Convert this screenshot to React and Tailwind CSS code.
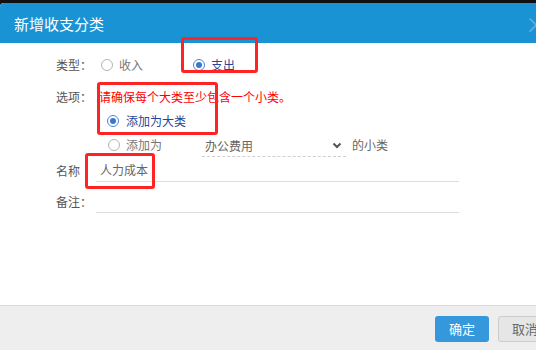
import React from "react";

const font = { fontFamily: '"Noto Sans CJK SC", "Noto Sans", sans-serif' };

const Radio = ({ checked }) =>
  checked ? (
    <span className="w-[12px] h-[12px] rounded-full border-[1.5px] border-[#4a86d4] flex items-center justify-center shrink-0">
      <span className="w-[6px] h-[6px] rounded-full bg-[#3a78cf]"></span>
    </span>
  ) : (
    <span className="w-[12px] h-[12px] rounded-full border border-[#b4b4b4] shrink-0"></span>
  );

const Mark = ({ className }) => (
  <div
    className={
      "absolute border-[3px] border-[#ff2424] rounded-[3px] pointer-events-none " +
      className
    }
  ></div>
);

const App = () => {
  return (
    <div
      className="relative w-[536px] h-[350px] overflow-hidden bg-[#111] pt-[3px] text-[12px]"
      style={font}
    >
      <div className="w-[560px] h-[347px] flex flex-col rounded-tl-[4px] overflow-hidden bg-white">
        {/* header */}
        <div className="h-[40px] bg-[#1a93d4] flex items-center justify-between pl-[14px] pr-[13px] shrink-0">
          <span className="text-white text-[15px] leading-none">新增收支分类</span>
          <span className="text-[#5fb0de] text-[22px] leading-none">×</span>
        </div>

        {/* body */}
        <div className="flex-1 pl-[56px] pt-[10px] text-[#555]">
          <div className="h-[24px] flex items-center">
            <span className="w-[40px]">类型：</span>
            <label className="w-[92px] flex items-center gap-[6px] ml-[5px]">
              <Radio />
              <span className="text-[#777]">收入</span>
            </label>
            <label className="flex items-center gap-[6px]">
              <Radio checked />
              <span className="text-[#23489b]">支出</span>
            </label>
          </div>

          <div className="h-[24px] mt-[8px] flex items-center">
            <span className="w-[40px]">选项：</span>
            <span className="ml-[3px] text-[#ff0000] whitespace-nowrap">
              请确保每个大类至少包含一个小类。
            </span>
          </div>

          <div className="h-[24px] flex items-center pl-[51px] gap-[7px]">
            <Radio checked />
            <span className="text-[#23489b]">添加为大类</span>
          </div>

          <div className="h-[24px] flex items-center pl-[52px]">
            <Radio />
            <span className="ml-[6px] w-[76px] text-[#777]">添加为</span>
            <div className="w-[144px] h-[22px] mt-[2px] flex items-center justify-between pl-[3px] pr-[4px] border-b border-dashed border-[#cfcfcf]">
              <span className="text-[#666]">办公费用</span>
              <svg width="10" height="7" viewBox="0 0 10 7">
                <polyline
                  points="1.5,1.5 5,5 8.5,1.5"
                  fill="none"
                  stroke="#555"
                  strokeWidth="2"
                />
              </svg>
            </div>
            <span className="ml-[6px] text-[#666]">的小类</span>
          </div>

          <div className="mt-[2px] flex items-start">
            <span className="w-[40px] h-[23px] flex items-center">名称</span>
            <div className="w-[363px] h-[23px] flex items-center pl-[4px] border-b border-[#dedede] text-[#666]">
              人力成本
            </div>
          </div>

          <div className="mt-[8px] flex items-start">
            <span className="w-[40px] h-[23px] flex items-center">备注：</span>
            <div className="w-[363px] h-[23px] border-b border-[#dedede]"></div>
          </div>
        </div>

        {/* footer */}
        <div className="h-[45px] shrink-0 border-t border-[#d8d8d8] bg-[#eeeeee] flex items-start justify-end gap-[9px] pt-[10px] pr-[8px]">
          <button className="w-[54px] h-[26px] rounded-[3px] bg-[#3598dc] text-white text-[13px]">
            确定
          </button>
          <button className="w-[54px] h-[26px] rounded-[3px] bg-[#e6e6e6] border border-[#cccccc] text-[#666] text-[13px]">
            取消
          </button>
        </div>
      </div>

      {/* annotation boxes */}
      <Mark className="left-[181px] top-[37px] w-[77px] h-[36px]" />
      <Mark className="left-[97px] top-[82px] w-[121px] h-[53px]" />
      <Mark className="left-[85px] top-[153px] w-[70px] h-[36px]" />
    </div>
  );
};

export default App;
